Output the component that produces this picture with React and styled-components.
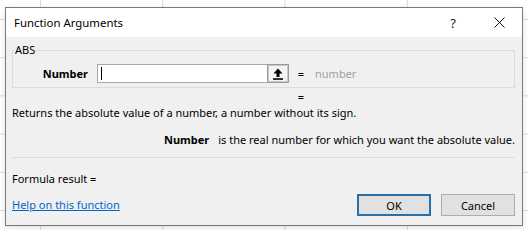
import React from "react";
import styled, { createGlobalStyle } from "styled-components";

const Global = createGlobalStyle`
  html, body { margin: 0; padding: 0; }
  body {
    font-family: "Noto Sans", "Open Sans", sans-serif;
    font-size: 11px;
    color: #000;
  }
  * { box-sizing: border-box; }
`;

const Page = styled.div`
  width: 528px;
  height: 230px;
  padding: 7px 0 0 5px;
  overflow: hidden;
  background-color: #fff;
  background-image:
    linear-gradient(to right, #d9d9d9 1px, transparent 1px),
    linear-gradient(to bottom, #d9d9d9 1px, transparent 1px);
  background-size: 122.3px 100%, 100% 38.2px;
  background-position: 40px 0, 0 19px;
`;

const Dialog = styled.div`
  width: 518px;
  height: 219px;
  border: 1px solid #7a7a7a;
  display: flex;
  flex-direction: column;
  background: #f0f0f0;
  box-shadow: 0 2px 6px rgba(0, 0, 0, 0.12);
`;

const TitleBar = styled.div`
  height: 29px;
  flex: none;
  background: #fff;
  display: flex;
  align-items: center;
  padding-left: 8px;
`;

const Title = styled.div`
  flex: 1;
  font-size: 11.4px;
  line-height: 16px;
`;

const TitleButton = styled.div`
  width: 46px;
  height: 29px;
  display: flex;
  align-items: center;
  justify-content: center;
  font-size: 13px;
  color: #222;
`;

const Body = styled.div`
  flex: 1;
  display: flex;
  flex-direction: column;
  padding: 5px 7px 8px 6px;
`;

const Group = styled.fieldset`
  margin: 0;
  padding: 0 0 4px 0;
  border: 1px solid #dcdcdc;
  min-width: 0;
`;

const Legend = styled.legend`
  margin-left: 1px;
  padding: 0 1px;
  font-size: 11px;
  line-height: 16px;
  color: #000;
`;

const ArgRow = styled.div`
  margin-top: 6px;
  height: 19px;
  display: flex;
  align-items: center;
`;

const ArgLabel = styled.div`
  width: 75px;
  margin-right: 9px;
  text-align: right;
  font-weight: 700;
  line-height: 16px;
`;

const Input = styled.div`
  width: 170px;
  height: 19px;
  background: #fff;
  border: 1px solid #a8a8a8;
  border-right: none;
  display: flex;
  align-items: center;
  padding-left: 3px;
`;

const Caret = styled.span`
  width: 1px;
  height: 13px;
  background: #000;
`;

const CollapseButton = styled.div`
  width: 22px;
  height: 19px;
  border: 1px solid #9a9a9a;
  box-shadow: inset 0 0 0 1px #c9c9c9;
  background: #f4f4f4;
  display: flex;
  align-items: center;
  justify-content: center;
`;

const Equals = styled.div`
  width: 10px;
  margin-left: ${(p) => p.$offset || 0}px;
  text-align: center;
  line-height: 14px;
`;

const ArgValue = styled.div`
  margin-left: 9px;
  color: #a0a0a0;
  line-height: 16px;
`;

const ResultRow = styled.div`
  height: 14px;
  margin-top: 2px;
  display: flex;
  align-items: center;
  padding-left: 284px;
  overflow: hidden;
`;

const Description = styled.div`
  margin-top: 1px;
  line-height: 16px;
`;

const ArgHelp = styled.div`
  margin-top: 11px;
  line-height: 16px;
  display: flex;
  justify-content: flex-end;
  gap: 9px;
`;

const Bold = styled.span`
  font-weight: 700;
`;

const Separator = styled.div`
  margin-top: 9px;
  height: 1px;
  background: #dcdcdc;
`;

const FormulaResult = styled.div`
  margin-top: 13px;
  line-height: 16px;
`;

const Footer = styled.div`
  margin-top: 7px;
  display: flex;
  align-items: center;
`;

const HelpLink = styled.a`
  flex: 1;
  color: #0066cc;
  text-decoration: underline;
  line-height: 16px;
  cursor: pointer;
`;

const Button = styled.button`
  width: 74px;
  height: 22px;
  margin-left: ${(p) => p.$gap || 0}px;
  font-family: inherit;
  font-size: 11px;
  color: #000;
  background: #e1e1e1;
  border: ${(p) => (p.$primary ? "2px solid #2a70a8" : "1px solid #adadad")};
  padding: 0;
`;

const UpArrow = () => (
  <svg width="10" height="12" viewBox="0 0 10 12">
    <path d="M5 0.5 L9.5 5.5 H6.5 V9 H3.5 V5.5 H0.5 Z" fill="#000" />
    <rect x="0" y="10.2" width="10" height="1.6" fill="#000" />
  </svg>
);

const CloseIcon = () => (
  <svg width="11" height="11" viewBox="0 0 11 11">
    <path d="M0.5 0.5 L10.5 10.5 M10.5 0.5 L0.5 10.5" stroke="#111" strokeWidth="1" fill="none" />
  </svg>
);

export default function App() {
  return (
    <>
      <Global />
      <Page>
        <Dialog>
          <TitleBar>
            <Title>Function Arguments</Title>
            <TitleButton>?</TitleButton>
            <TitleButton>
              <CloseIcon />
            </TitleButton>
          </TitleBar>
          <Body>
            <Group>
              <Legend>ABS</Legend>
              <ArgRow>
                <ArgLabel>Number</ArgLabel>
                <Input>
                  <Caret />
                </Input>
                <CollapseButton>
                  <UpArrow />
                </CollapseButton>
                <Equals $offset={7}>=</Equals>
                <ArgValue>number</ArgValue>
              </ArgRow>
            </Group>
            <ResultRow>
              <Equals>=</Equals>
            </ResultRow>
            <Description>
              Returns the absolute value of a number, a number without its sign.
            </Description>
            <ArgHelp>
              <Bold>Number</Bold>
              <span>is the real number for which you want the absolute value.</span>
            </ArgHelp>
            <Separator />
            <FormulaResult>Formula result =</FormulaResult>
            <Footer>
              <HelpLink>Help on this function</HelpLink>
              <Button $primary>OK</Button>
              <Button $gap={10}>Cancel</Button>
            </Footer>
          </Body>
        </Dialog>
      </Page>
    </>
  );
}
